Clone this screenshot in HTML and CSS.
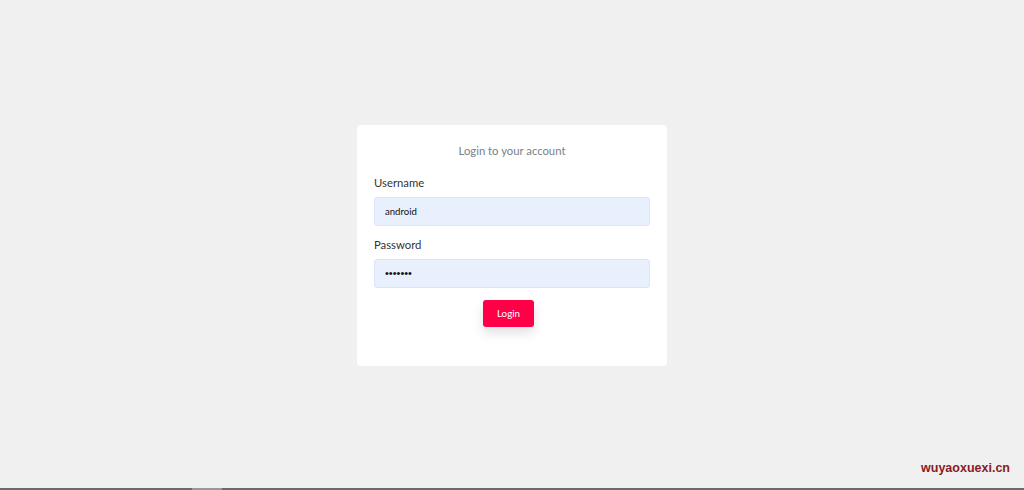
FILE: index.html
```html
<!DOCTYPE html>
<html>
<head>
<meta charset="utf-8">
<link rel="stylesheet" href="styles.css">
</head>
<body>
<main class="page">
  <form class="card">
    <h1 class="title">Login to your account</h1>
    <label class="label" for="u">Username</label>
    <input class="field" id="u" type="text" value="android">
    <label class="label" for="p">Password</label>
    <input class="field pw" id="p" type="password" value="android">
    <div class="actions"><button type="button" class="btn">Login</button></div>
  </form>
</main>
<div class="bottombar"><span class="seg"></span></div>
<div class="watermark">wuyaoxuexi.cn</div>
</body>
</html>
```
FILE: styles.css
```css
html, body { margin: 0; padding: 0; }
body {
  width: 1024px; height: 490px; overflow: hidden;
  background: #f0f0f0;
  font-family: "Lato", "Noto Sans", sans-serif;
  position: relative;
}
.page {
  height: 490px;
  display: flex; align-items: center; justify-content: center;
}
.card {
  width: 310px; box-sizing: border-box;
  background: #fff; border-radius: 4px;
  padding: 16px 17px 39px;
  display: flex; flex-direction: column;
}
.title {
  margin: 0 0 12px; text-align: center;
  font-size: 11.3px; font-weight: 400; line-height: 20px; color: #7a7f88;
}
.label {
  font-size: 11.3px; line-height: 20px; color: #333;
  margin-bottom: 4px;
}
.field {
  height: 29px; box-sizing: border-box;
  background: #e8f0fe; border: 1px solid #dde3f2; border-radius: 3px;
  padding: 0 10px; font-family: inherit; font-size: 9.6px; color: #111;
  margin: 0 0 9px;
}
.pw { font-family: "Liberation Sans", sans-serif; font-size: 11px; }
.actions { display: flex; justify-content: center; margin-top: 3px; padding-right: 7px; }
.btn {
  width: 51px; height: 27px; border: 0; border-radius: 3px;
  background: #ff0048; color: #fff;
  font-family: inherit; font-size: 9.8px;
  box-shadow: 0 6px 12px rgba(0,0,0,0.12);
}
.bottombar {
  position: absolute; left: 0; right: 0; bottom: 0; height: 2px;
  background: #6a6a6a;
}
.seg { position: absolute; left: 192px; width: 30px; top: 0; bottom: 0; background: #999; }
.watermark {
  position: absolute; right: 14px; bottom: 15px;
  font-family: "Liberation Sans", sans-serif; font-weight: bold;
  font-size: 12.5px; color: #8a1a24;
}
```
